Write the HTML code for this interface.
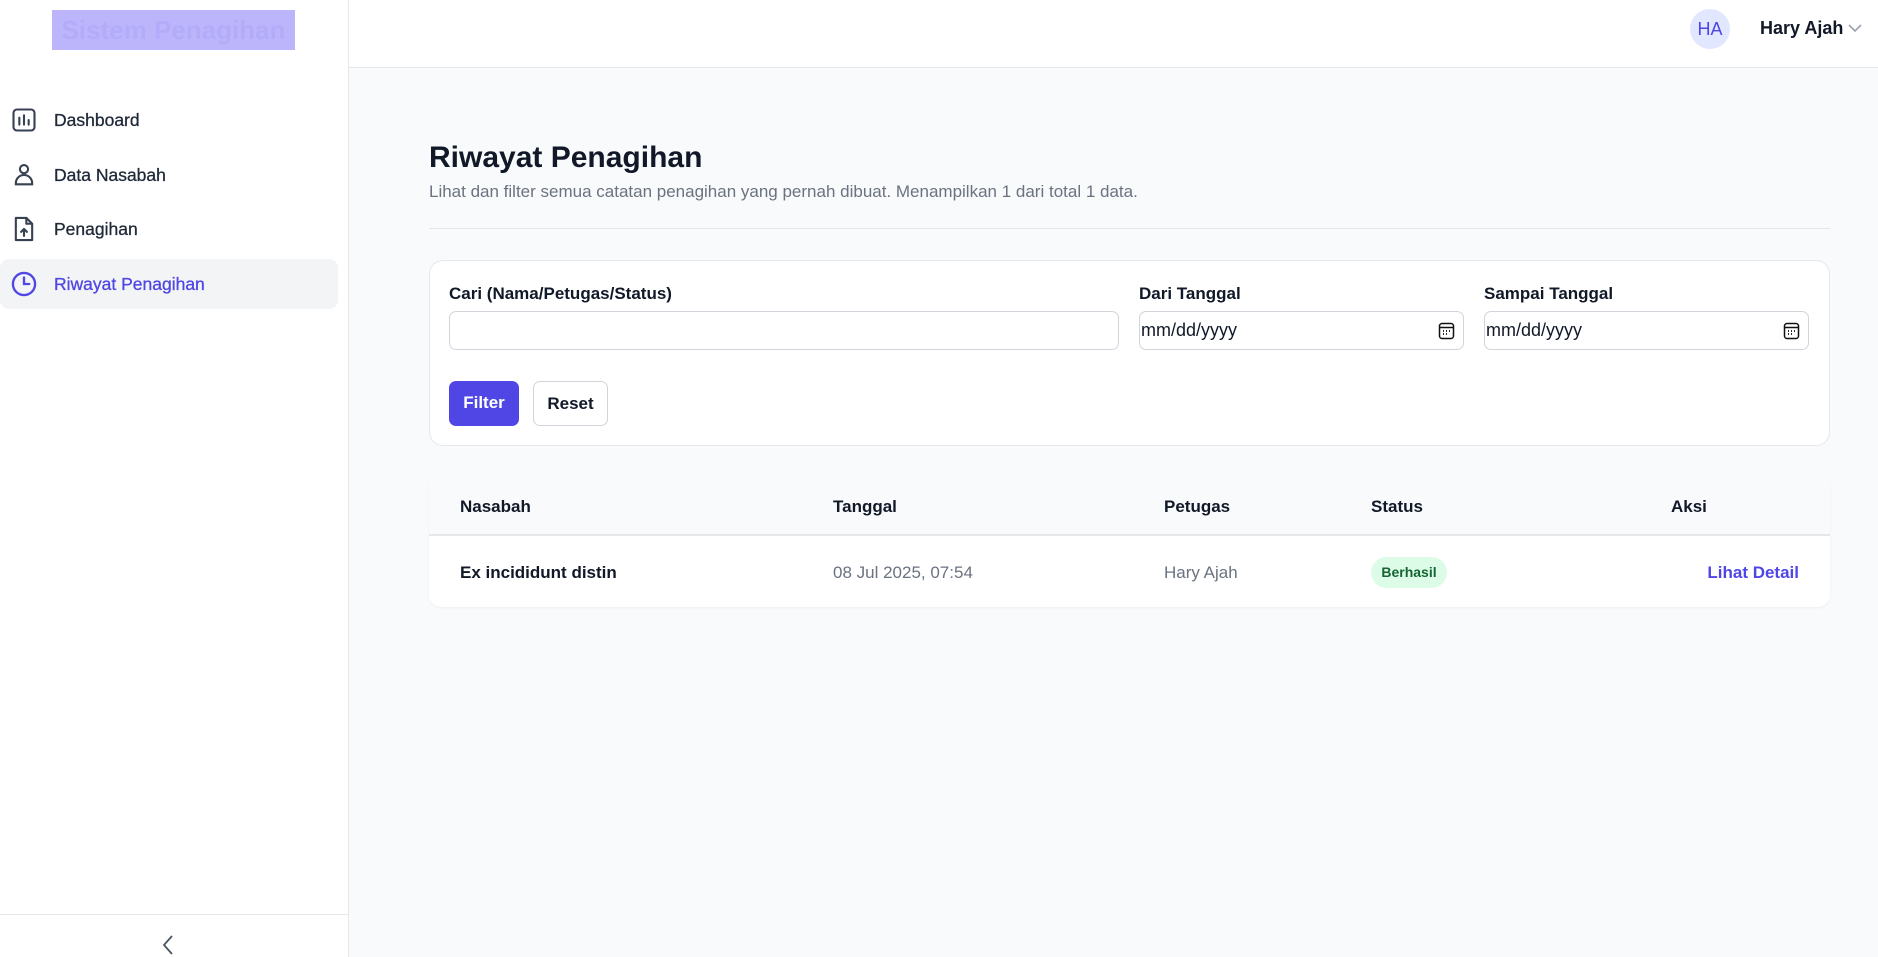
<!DOCTYPE html>
<html><head><meta charset="utf-8"><style>
*{box-sizing:border-box;margin:0;padding:0}
body{width:1878px;height:957px;overflow:hidden;font-family:"Liberation Sans",sans-serif;background:#f9fafb;color:#111827;position:relative}
.side{position:absolute;left:0;top:0;width:349px;height:957px;background:#fff;border-right:1px solid #e5e7eb}
.logo{position:absolute;left:52px;top:10px;width:243px;height:40px;background:#bcb5fc;color:#b3acf9;font-size:26px;font-weight:bold;text-align:center;line-height:40px;overflow:hidden;white-space:nowrap}
.nav{position:absolute;left:0;width:338px;height:50px;border-radius:9px;display:flex;align-items:center;font-size:17.5px;color:#1f2937;-webkit-text-stroke:0.3px #1f2937}
.nav svg{position:absolute;left:10px;width:28px;height:28px}
.nav span{position:absolute;left:54px}
.nav.act{background:#f3f4f6;color:#4f46e5;-webkit-text-stroke:0.3px #4f46e5}
.hdr{position:absolute;left:349px;top:0;right:0;height:68px;background:#fff;border-bottom:1px solid #e5e7eb}
.av{position:absolute;top:9px;width:40px;height:40px;border-radius:50%;background:#e0e7ff;color:#4f46e5;font-size:18px;text-align:center;line-height:40px}
.un{position:absolute;top:18px;font-size:18px;font-weight:bold;color:#111827}
.t1{position:absolute;left:429px;top:141px;font-size:30px;font-weight:bold}
.sub{position:absolute;left:429px;top:182px;font-size:17px;color:#6b7280}
.hr{position:absolute;left:429px;top:228px;width:1401px;height:1px;background:#e5e7eb}
.card{position:absolute;left:429px;top:260px;width:1401px;height:186px;background:#fff;border:1px solid #e5e7eb;border-radius:14px}
.lbl{position:absolute;top:284px;font-size:17px;font-weight:bold;color:#111827}
.inp{position:absolute;top:311px;height:39px;border:1px solid #d1d5db;border-radius:7px;background:#fff;font-size:18px;color:#111827;line-height:37px;padding-left:1px}
.inp svg{position:absolute;right:8px;top:10px}
.btn{position:absolute;top:381px;height:45px;border-radius:7px;font-size:17px;font-weight:bold;text-align:center;line-height:43px}
.tbl{position:absolute;left:429px;top:475px;width:1401px;height:132px;background:#fff;border-radius:12px;overflow:hidden;box-shadow:0 1px 2px rgba(0,0,0,.05)}
.th{position:absolute;left:0;top:0;width:100%;height:61px;background:#f9fafb;border-bottom:2px solid #e5e7eb}
.c{position:absolute;font-size:17px}
</style></head><body>
<div class="side">
 <div class="logo">Sistem Penagihan</div>
 <div class="nav" style="top:95px"><svg viewBox="0 0 24 24" fill="none" stroke="#374151" stroke-width="1.8" stroke-linecap="round"><rect x="3" y="3" width="18" height="18" rx="3"/><path d="M8 10v6M12 8v8M16 12v4"/></svg><span>Dashboard</span></div>
 <div class="nav" style="top:150px"><svg viewBox="0 0 24 24" fill="none" stroke="#374151" stroke-width="1.8"><circle cx="12" cy="7" r="3.5"/><path d="M5 20v-1a7 7 0 0 1 14 0v1z"/></svg><span>Data Nasabah</span></div>
 <div class="nav" style="top:204px"><svg viewBox="0 0 24 24" fill="none" stroke="#374151" stroke-width="1.8" stroke-linejoin="round" stroke-linecap="round"><path d="M5 2.5h9l5 5v14H5z"/><path d="M14 2.5v5h5M12 18v-6M9.5 14.5 12 12l2.5 2.5"/></svg><span>Penagihan</span></div>
 <div class="nav act" style="top:259px"><svg viewBox="0 0 24 24" fill="none" stroke="#4f46e5" stroke-width="2" stroke-linecap="round"><circle cx="12" cy="12" r="9.5"/><path d="M12 6.5V12h4.5"/></svg><span>Riwayat Penagihan</span></div>
 <div style="position:absolute;left:0;top:914px;width:348px;height:1px;background:#e5e7eb"></div>
 <svg style="position:absolute;left:160px;top:934px" width="16" height="22" viewBox="0 0 16 22" fill="none" stroke="#4b5563" stroke-width="1.8"><path d="M12 2 4 11l8 9"/></svg>
</div>
<div class="hdr">
 <div class="av" style="left:1341px">HA</div>
 <div class="un" style="left:1411px">Hary Ajah</div>
 <svg style="position:absolute;left:1498px;top:22px" width="16" height="12" viewBox="0 0 16 12" fill="none" stroke="#9ca3af" stroke-width="1.6"><path d="M2 3l6 6 6-6"/></svg>
</div>
<div class="t1">Riwayat Penagihan</div>
<div class="sub">Lihat dan filter semua catatan penagihan yang pernah dibuat. Menampilkan 1 dari total 1 data.</div>
<div class="hr"></div>
<div class="card"></div>
<div class="lbl" style="left:449px">Cari (Nama/Petugas/Status)</div>
<div class="lbl" style="left:1139px">Dari Tanggal</div>
<div class="lbl" style="left:1484px">Sampai Tanggal</div>
<div class="inp" style="left:449px;width:670px"></div>
<div class="inp" style="left:1139px;width:325px">mm/dd/yyyy<svg width="17" height="18" viewBox="0 0 17 18" fill="none" stroke="#111" stroke-width="1.5"><rect x="1.5" y="1.5" width="14" height="15" rx="2.5"/><path d="M1.5 5.5h14"/><path d="M5 9h1M8 9h1M11 9h1M5 12h1M8 12h1" stroke-width="1.8"/></svg></div>
<div class="inp" style="left:1484px;width:325px">mm/dd/yyyy<svg width="17" height="18" viewBox="0 0 17 18" fill="none" stroke="#111" stroke-width="1.5"><rect x="1.5" y="1.5" width="14" height="15" rx="2.5"/><path d="M1.5 5.5h14"/><path d="M5 9h1M8 9h1M11 9h1M5 12h1M8 12h1" stroke-width="1.8"/></svg></div>
<div class="btn" style="left:449px;width:70px;background:#4f46e5;color:#fff">Filter</div>
<div class="btn" style="left:533px;width:75px;background:#fff;border:1px solid #d1d5db;color:#111827">Reset</div>
<div class="tbl">
 <div class="th"></div>
 <div class="c" style="left:31px;top:22px;font-weight:bold">Nasabah</div>
 <div class="c" style="left:404px;top:22px;font-weight:bold">Tanggal</div>
 <div class="c" style="left:735px;top:22px;font-weight:bold">Petugas</div>
 <div class="c" style="left:942px;top:22px;font-weight:bold">Status</div>
 <div class="c" style="left:1242px;top:22px;font-weight:bold">Aksi</div>
 <div class="c" style="left:31px;top:88px;font-weight:bold">Ex incididunt distin</div>
 <div class="c" style="left:404px;top:88px;color:#6b7280">08 Jul 2025, 07:54</div>
 <div class="c" style="left:735px;top:88px;color:#6b7280">Hary Ajah</div>
 <div style="position:absolute;left:942px;top:82px;width:76px;height:31px;border-radius:16px;background:#dcfce7;color:#166534;font-size:14px;font-weight:bold;text-align:center;line-height:31px">Berhasil</div>
 <div class="c" style="right:31px;top:88px;color:#4f46e5;font-weight:bold">Lihat Detail</div>
</div>
</body></html>
